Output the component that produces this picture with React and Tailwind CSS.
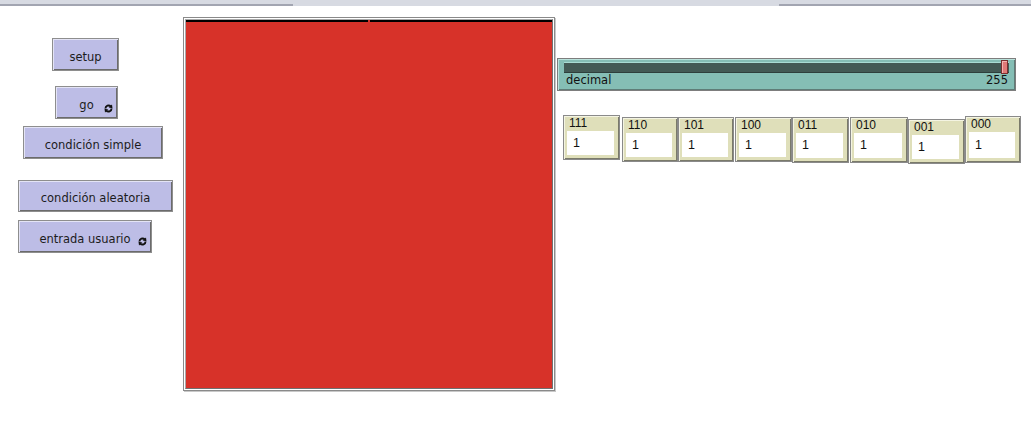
import React from 'react';

// NetLogo style interface: buttons, world view, slider and input widgets.
const btn =
  "relative flex items-center justify-center pt-[6px] bg-[#bdbde6] border border-[#8e8e8e] shadow-[inset_1px_1px_0_#e4e4f6,inset_-1px_-1px_0_#6b6b6b] text-[11.5px] text-[#1c1c1c] font-['DejaVu_Sans',sans-serif]";

function Forever({ className }) {
  return (
    <svg viewBox="0 0 8 8" className={className}>
      <path d="M1.3 4 A2.7 2.7 0 0 1 6 2.2" stroke="#111" strokeWidth="1.7" fill="none" />
      <path d="M7.1 0.4 L7.5 3.8 L4.2 3.2 Z" fill="#111" />
      <path d="M6.7 4 A2.7 2.7 0 0 1 2 5.8" stroke="#111" strokeWidth="1.7" fill="none" />
      <path d="M0.9 7.6 L0.5 4.2 L3.8 4.8 Z" fill="#111" />
    </svg>
  );
}

const inputs = [
  { label: '111', cls: 'ml-[8px] mt-0 w-[57px] h-[45px]' },
  { label: '110', cls: 'ml-[2px] mt-[2px] w-[56px] h-[45px]' },
  { label: '101', cls: 'ml-0 mt-[2px] w-[56px] h-[45px]' },
  { label: '100', cls: 'ml-[1px] mt-[2px] w-[57px] h-[45px]' },
  { label: '011', cls: 'ml-0 mt-[2px] w-[57px] h-[46px]' },
  { label: '010', cls: 'ml-[1px] mt-[2px] w-[58px] h-[46px]' },
  { label: '001', cls: 'ml-0 mt-[4px] w-[57px] h-[45px]' },
  { label: '000', cls: 'ml-0 mt-[1px] w-[56px] h-[47px]' },
];

function InputBox({ label, cls }) {
  return (
    <div
      className={`flex flex-col bg-[#dfdfba] border border-[#8a8a8a] shadow-[inset_1px_1px_0_#f4f4e2,inset_-1px_-1px_0_#7a7a6a] px-[3px] pb-[4px] font-['Liberation_Sans',sans-serif] text-[12px] text-[#111] ${cls}`}
    >
      <div className="h-[15px] leading-[14px] pl-[2px]">{label}</div>
      <div className="flex-1 mr-[2px] bg-white flex items-center pl-[6px] text-[12.5px]">1</div>
    </div>
  );
}

export default function App() {
  return (
    <div className="w-[1031px] h-[431px] bg-white overflow-hidden">
      <div className="flex h-[6px] bg-[#d7dae2]">
        <div className="w-[293px] border-b-2 border-[#a2a5b1]" />
        <div className="w-[486px]" />
        <div className="flex-1 border-b-2 border-[#a2a5b1]" />
      </div>

      <div className="flex">
        <div className="w-[183px] flex flex-col items-start">
          <div className={`${btn} ml-[52px] mt-[32px] w-[67px] h-[33px]`}>setup</div>
          <div className={`${btn} ml-[55px] mt-[15px] w-[63px] h-[33px]`}>
            go
            <Forever className="absolute right-[4px] bottom-[5px] w-[9px] h-[9px]" />
          </div>
          <div className={`${btn} ml-[23px] mt-[7px] w-[140px] h-[33px]`}>condición simple</div>
          <div className={`${btn} ml-[18px] mt-[21px] w-[155px] h-[32px]`}>condición aleatoria</div>
          <div className={`${btn} ml-[18px] mt-[8px] w-[134px] h-[33px]`}>
            entrada usuario
            <Forever className="absolute right-[4px] bottom-[6px] w-[9px] h-[9px]" />
          </div>
        </div>

        <div className="mt-[11px] w-[372px] h-[374px] border border-[#8a8a8a] bg-white p-[1px] shadow-[1px_1px_0_#c8c8c8]">
          <div className="w-full h-full border border-[#a9a9a9] border-r-[#707070] border-b-[#707070] flex flex-col">
            <div className="h-[2px] bg-black flex justify-center">
              <div className="w-[2px] bg-[#d73229]" />
            </div>
            <div className="flex-1 bg-[#d73229]" />
          </div>
        </div>

        <div className="flex flex-col">
          <div className="ml-[2px] mt-[52px] w-[459px] h-[33px] bg-[#85beb5] border border-[#7d7d7d] shadow-[inset_1px_1px_0_#b9e2db,inset_-1px_-1px_0_#5f7d78] px-[6px] pt-[3px] font-['DejaVu_Sans',sans-serif] text-[11.5px] text-[#111]">
            <div className="relative h-[11px] bg-[#435a55] border-t border-[#a9dcd3] border-b border-b-[#2e3f3c]">
              <div className="absolute right-[1px] top-[-3px] w-[7px] h-[14px] bg-[#e07a78] border border-[#7a2f2f] shadow-[inset_1px_1px_0_#f4b4b2]" />
            </div>
            <div className="flex justify-between leading-[14px] pl-[2px] pr-[1px]">
              <span>decimal</span>
              <span>255</span>
            </div>
          </div>

          <div className="flex items-start mt-[24px]">
            {inputs.map((b) => (
              <InputBox key={b.label} {...b} />
            ))}
          </div>
        </div>
      </div>
    </div>
  );
}
